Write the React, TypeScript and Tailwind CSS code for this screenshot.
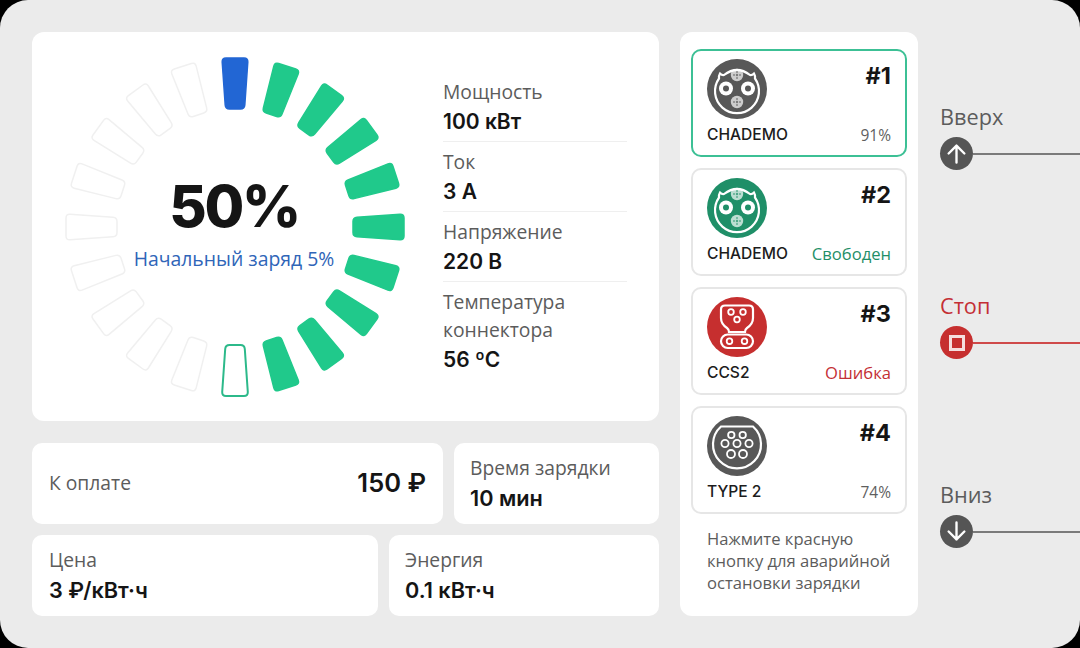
import type { ReactNode } from 'react';

const valueFont = "font-['Inter',sans-serif]";
const labelFont = "font-['Open_Sans',sans-serif]";

// 20 сегментов по кругу, от верхнего по часовой стрелке
function Gauge() {
  const segments = Array.from({ length: 20 }, (_, i) => i);
  return (
    <svg viewBox="0 0 350 350" className="absolute left-[28px] top-[20px] h-[350px] w-[350px]">
      {segments.map((i) => {
        const blue = i === 0;
        const green = i >= 1 && i <= 9;
        const outline = i === 10;
        return (
          <path
            key={i}
            transform={`rotate(${i * 18} 175 175)`}
            d="M166 6 H184 Q188 6 187.8 10 L184.8 53 Q184.5 57 180.5 57 H169.5 Q165.5 57 165.2 53 L162.2 10 Q162 6 166 6 Z"
            fill={blue ? '#2266d4' : green ? '#20c98b' : '#ffffff'}
            stroke={blue ? '#2266d4' : green ? '#20c98b' : outline ? '#2cb98a' : '#f0f0f0'}
            strokeWidth={outline ? 2 : 1.5}
          />
        );
      })}
    </svg>
  );
}

function Metric({ label, value, last }: { label: ReactNode; value: string; last?: boolean }) {
  return (
    <div className={`w-[184px] pb-[3px] pt-[6px] ${last ? '' : 'border-b border-[#efefef]'}`}>
      <div className={`${labelFont} text-[19.3px] leading-[28px] text-[#5c5c5c]`}>{label}</div>
      <div className={`${valueFont} text-[21px] font-semibold leading-[32px] text-[#151515]`}>{value}</div>
    </div>
  );
}

function ChademoIcon({ color }: { color: string }) {
  return (
    <svg viewBox="0 0 60 60" className="h-[60px] w-[60px]">
      <circle cx="30" cy="30" r="30" fill={color} />
      <path
        d="M13 14.5 Q15 16.5 17 16 Q30 6 43 16 Q45 16.5 47 14.5 Q48.5 17 48 19.5 A22 22 0 1 1 12 19.5 Q11.5 17 13 14.5 Z"
        fill="none"
        stroke="#fff"
        strokeWidth="2.2"
      />
      <circle cx="19" cy="29.5" r="7" fill="#fff" />
      <circle cx="19" cy="29.5" r="3" fill={color} />
      <circle cx="41" cy="29.5" r="7" fill="#fff" />
      <circle cx="41" cy="29.5" r="3" fill={color} />
      {[16, 43].map((y) => (
        <g key={y}>
          <circle cx="30" cy={y} r="6.2" fill="#fff" opacity="0.7" />
          <circle cx="30" cy={y} r="1.2" fill={color} opacity="0.7" />
          <circle cx="27" cy={y} r="1" fill={color} opacity="0.6" />
          <circle cx="33" cy={y} r="1" fill={color} opacity="0.6" />
          <circle cx="30" cy={y - 3} r="1" fill={color} opacity="0.6" />
          <circle cx="30" cy={y + 3} r="1" fill={color} opacity="0.6" />
        </g>
      ))}
    </svg>
  );
}

function CcsIcon({ color }: { color: string }) {
  return (
    <svg viewBox="0 0 60 60" className="h-[60px] w-[60px]">
      <circle cx="30" cy="30" r="30" fill={color} />
      <path
        d="M18 8.5 H42 Q46 8.5 46 12.5 V21 Q46 27 40 31 Q38 32.5 38 35 H22 Q22 32.5 20 31 Q14 27 14 21 V12.5 Q14 8.5 18 8.5 Z"
        fill="none"
        stroke="#fff"
        strokeWidth="2.2"
      />
      <rect x="14" y="37.5" width="32" height="13.5" rx="6.75" fill="none" stroke="#fff" strokeWidth="2.2" />
      {[
        [24, 15],
        [36, 15],
        [30, 22.5],
        [22.5, 44.2],
        [37.5, 44.2],
      ].map(([cx, cy]) => (
        <circle key={`${cx}-${cy}`} cx={cx} cy={cy} r="2.8" fill="none" stroke="#fff" strokeWidth="1.8" />
      ))}
    </svg>
  );
}

function TypeTwoIcon({ color }: { color: string }) {
  return (
    <svg viewBox="0 0 60 60" className="h-[60px] w-[60px]">
      <circle cx="30" cy="30" r="30" fill={color} />
      <path d="M14 10.5 H46 A24 24 0 1 1 14 10.5 Z" fill="none" stroke="#fff" strokeWidth="2.2" />
      {[
        [24.3, 19, 3.2],
        [35.7, 19, 3.2],
        [18, 27.5, 3.6],
        [30, 27.5, 3.6],
        [42, 27.5, 3.6],
        [24, 38, 4],
        [36, 38, 4],
      ].map(([cx, cy, r]) => (
        <circle key={`${cx}-${cy}`} cx={cx} cy={cy} r={r} fill="none" stroke="#fff" strokeWidth="1.8" />
      ))}
    </svg>
  );
}

const connectors = [
  { id: '#1', name: 'CHADEMO', status: '91%', tone: 'text-[15.5px] text-[#5f5f5f]', active: true, icon: <ChademoIcon color="#585858" /> },
  { id: '#2', name: 'CHADEMO', status: 'Свободен', tone: 'text-[16.6px] text-[#1f8f68]', active: false, icon: <ChademoIcon color="#1f8f68" /> },
  { id: '#3', name: 'CCS2', status: 'Ошибка', tone: 'text-[16.6px] text-[#c42f35]', active: false, icon: <CcsIcon color="#c62f2f" /> },
  { id: '#4', name: 'TYPE 2', status: '74%', tone: 'text-[15.5px] text-[#5f5f5f]', active: false, icon: <TypeTwoIcon color="#585858" /> },
];

function ConnectorCard({ item }: { item: (typeof connectors)[number] }) {
  return (
    <div
      className={`flex h-[108px] flex-col rounded-[10px] border-2 bg-white pl-[14px] pr-[14px] pt-[8px] ${
        item.active ? 'border-[#3cc095]' : 'border-[#e6e6e6]'
      }`}
    >
      <div className="flex items-start justify-between">
        {item.icon}
        <span className={`${valueFont} mt-[2px] text-[23.5px] font-bold leading-[30px] text-[#151515]`}>{item.id}</span>
      </div>
      <div className="mt-[6px] flex items-center justify-between">
        <span className={`${valueFont} text-[15.6px] font-medium leading-[20px] text-[#1c1c1c]`}>{item.name}</span>
        <span className={`${labelFont} leading-[20px] ${item.tone}`}>{item.status}</span>
      </div>
    </div>
  );
}

function SideButton({ label, tone, line, bg, children }: { label: string; tone: string; line: string; bg: string; children: ReactNode }) {
  return (
    <div>
      <div className={`${labelFont} pl-[22px] text-[21.7px] leading-[28px] ${tone}`}>{label}</div>
      <div className="mt-[6px] flex items-center pl-[22px]">
        <div className={`flex h-[33px] w-[33px] shrink-0 items-center justify-center rounded-full ${bg}`}>{children}</div>
        <div className={`h-[2px] flex-1 ${line}`} />
      </div>
    </div>
  );
}

function InfoCard({ label, value, className }: { label: string; value: string; className: string }) {
  return (
    <div className={`flex h-[81px] flex-col justify-center rounded-[10px] bg-white ${className}`}>
      <div className={`${labelFont} text-[19.3px] leading-[28px] text-[#5c5c5c]`}>{label}</div>
      <div className={`${valueFont} text-[21.7px] font-semibold leading-[32px] text-[#151515]`}>{value}</div>
    </div>
  );
}

export default function App() {
  return (
    <div className="h-[648px] w-[1080px] overflow-hidden bg-black">
      <div className="flex h-full w-full rounded-[28px] bg-[#ebebeb] pl-[32px] pt-[32px]">
        <div className="flex w-[627px] shrink-0 flex-col">
          <div className="relative h-[389px] rounded-[12px] bg-white">
            <Gauge />
            <div className="absolute left-[27px] top-[20px] flex h-[350px] w-[350px] flex-col items-center pt-[122px]">
              <div className={`${valueFont} text-[57.5px] font-extrabold leading-[64px] tracking-[-0.04em] text-[#151515]`}>50%</div>
              <div className={`${labelFont} mt-[8px] text-[19.4px] leading-[26px] text-[#2f65b8]`}>Начальный заряд 5%</div>
            </div>
            <div className="absolute left-[411px] top-[40px]">
              <Metric label="Мощность" value="100 кВт" />
              <Metric label="Ток" value="3 А" />
              <Metric label="Напряжение" value="220 В" />
              <Metric label={<>Температура<br />коннектора</>} value="56 ºС" last />
            </div>
          </div>
          <div className="mt-[22px] flex gap-[11px]">
            <div className="flex h-[81px] w-[411px] items-center justify-between rounded-[10px] bg-white pl-[17px] pr-[17px]">
              <span className={`${labelFont} text-[19.3px] text-[#5c5c5c]`}>К оплате</span>
              <span className={`${valueFont} text-[25.5px] font-semibold text-[#151515]`}>150 ₽</span>
            </div>
            <InfoCard label="Время зарядки" value="10 мин" className="w-[205px] pl-[16px]" />
          </div>
          <div className="mt-[11px] flex gap-[11px]">
            <InfoCard label="Цена" value="3 ₽/кВт·ч" className="w-[346px] pl-[17px]" />
            <InfoCard label="Энергия" value="0.1 кВт·ч" className="w-[270px] pl-[16px]" />
          </div>
        </div>

        <div className="ml-[21px] flex h-[584px] w-[238px] shrink-0 flex-col rounded-[12px] bg-white px-[11px] pt-[17px]">
          <div className="flex flex-col gap-[11px]">
            {connectors.map((item) => (
              <ConnectorCard key={item.id} item={item} />
            ))}
          </div>
          <p className={`${labelFont} mt-[14px] pl-[16px] text-[16.6px] leading-[22px] text-[#5c5c5c]`}>
            Нажмите красную кнопку для аварийной остановки зарядки
          </p>
        </div>

        <div className="flex flex-1 flex-col pt-[71px]">
          <SideButton label="Вверх" tone="text-[#5c5c5c]" line="bg-[#7a7a7a]" bg="bg-[#555555]">
            <svg viewBox="0 0 24 24" className="h-[27px] w-[27px]" fill="none" stroke="#fff" strokeWidth="2.1" strokeLinecap="round" strokeLinejoin="round">
              <path d="M12 20V5M5 12l7-7 7 7" />
            </svg>
          </SideButton>
          <div className="mt-[122px]">
            <SideButton label="Стоп" tone="text-[#c42f35]" line="bg-[#cf4a4a]" bg="bg-[#c62f2f]">
              <div className="h-[16px] w-[16px] border-[3px] border-[#f5dede]" />
            </SideButton>
          </div>
          <div className="mt-[122px]">
            <SideButton label="Вниз" tone="text-[#5c5c5c]" line="bg-[#7a7a7a]" bg="bg-[#555555]">
              <svg viewBox="0 0 24 24" className="h-[27px] w-[27px]" fill="none" stroke="#fff" strokeWidth="2.1" strokeLinecap="round" strokeLinejoin="round">
                <path d="M12 4v15M5 12l7 7 7-7" />
              </svg>
            </SideButton>
          </div>
        </div>
      </div>
    </div>
  );
}
